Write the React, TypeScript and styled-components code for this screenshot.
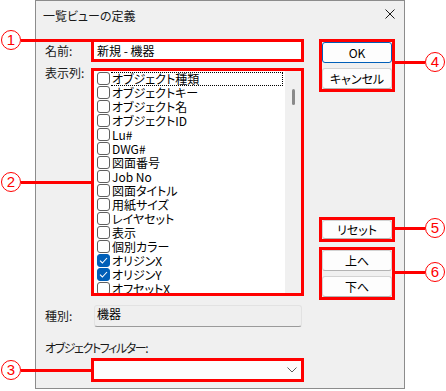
import React from 'react';
import styled, { createGlobalStyle } from 'styled-components';

const GlobalStyle = createGlobalStyle`
  html, body {
    margin: 0;
    padding: 0;
    background: #fff;
  }
  body {
    font-family: "Noto Sans CJK JP", "Noto Sans", sans-serif;
    font-size: 12px;
    font-feature-settings: "palt";
    color: #000;
  }
`;

const columns = [
  { label: 'オブジェクト種類', checked: false },
  { label: 'オブジェクトキー', checked: false },
  { label: 'オブジェクト名', checked: false },
  { label: 'オブジェクトID', checked: false },
  { label: 'Lu#', checked: false },
  { label: 'DWG#', checked: false },
  { label: '図面番号', checked: false },
  { label: 'Job No', checked: false },
  { label: '図面タイトル', checked: false },
  { label: '用紙サイズ', checked: false },
  { label: 'レイヤセット', checked: false },
  { label: '表示', checked: false },
  { label: '個別カラー', checked: false },
  { label: 'オリジンX', checked: true },
  { label: 'オリジンY', checked: true },
  { label: 'オフセットX', checked: false },
];

// numbered callouts drawn over the screenshot
const markers = [
  { n: '1', x: 11, y: 40, from: 21, to: 91 },
  { n: '2', x: 11, y: 182, from: 21, to: 91 },
  { n: '3', x: 11, y: 370, from: 21, to: 91 },
  { n: '4', x: 435, y: 62, from: 395, to: 425 },
  { n: '5', x: 435, y: 228, from: 395, to: 425 },
  { n: '6', x: 435, y: 272, from: 395, to: 425 },
];

const App = () => {
  return (
    <>
      <GlobalStyle />
      <Page>
        <Dialog>
          <TitleBar>
            <Title>一覧ビューの定義</Title>
            <CloseIcon viewBox="0 0 10 10">
              <path d="M0.5 0.5 L9.5 9.5 M9.5 0.5 L0.5 9.5" />
            </CloseIcon>
          </TitleBar>
          <Body>
            <MainColumn>
              <FieldRow>
                <FieldLabel>名前:</FieldLabel>
                <RedFrame $height={23}>
                  <NameInput>新規 - 機器</NameInput>
                </RedFrame>
              </FieldRow>
              <FieldRow $top $gap={6}>
                <FieldLabel $shift={-2}>表示列:</FieldLabel>
                <RedFrame $height={228}>
                  <ListBox>
                    <ListItems>
                      {columns.map((col, index) => (
                        <ListItem key={col.label}>
                          <CheckBox $checked={col.checked}>
                            {col.checked ? (
                              <svg width="9" height="7" viewBox="0 0 9 7">
                                <path
                                  d="M1 3.6 L3.4 6 L8 1"
                                  fill="none"
                                  stroke="#fff"
                                  strokeWidth="1.1"
                                />
                              </svg>
                            ) : null}
                          </CheckBox>
                          <ItemText $focused={index === 0}>{col.label}</ItemText>
                        </ListItem>
                      ))}
                    </ListItems>
                    <ScrollTrack>
                      <ScrollThumb />
                    </ScrollTrack>
                  </ListBox>
                </RedFrame>
              </FieldRow>
              <FieldRow $gap={9}>
                <FieldLabel>種別:</FieldLabel>
                <ReadOnlyField>機器</ReadOnlyField>
              </FieldRow>
              <FilterLabel>オブジェクトフィルター:</FilterLabel>
              <ComboFrame>
                <Combo>
                  <svg width="10" height="6" viewBox="0 0 10 6">
                    <path d="M0.5 0.5 L5 5 L9.5 0.5" fill="none" stroke="#5c5c5c" strokeWidth="1" />
                  </svg>
                </Combo>
              </ComboFrame>
            </MainColumn>
            <SideColumn>
              <RedFrame $height={53}>
                <ButtonStack>
                  <DialogButton $primary>OK</DialogButton>
                  <DialogButton>キャンセル</DialogButton>
                </ButtonStack>
              </RedFrame>
              <RedFrame $height={25} $gap={125}>
                <DialogButton $tall={19}>リセット</DialogButton>
              </RedFrame>
              <RedFrame $height={53} $gap={5}>
                <ButtonStack>
                  <DialogButton>上へ</DialogButton>
                  <DialogButton>下へ</DialogButton>
                </ButtonStack>
              </RedFrame>
            </SideColumn>
          </Body>
        </Dialog>
        {markers.map((m) => (
          <React.Fragment key={m.n}>
            <Leader $from={m.from} $to={m.to} $y={m.y} />
            <Marker $x={m.x} $y={m.y}>{m.n}</Marker>
          </React.Fragment>
        ))}
      </Page>
    </>
  );
};

const Page = styled.div`
  position: relative;
  width: 446px;
  height: 391px;
  overflow: hidden;
  background: #fff;
`;

const Dialog = styled.div`
  margin-left: 35px;
  width: 370px;
  height: 389px;
  box-sizing: border-box;
  border: 1px solid #8c8c8c;
  background: #f0f0f0;
  display: flex;
  flex-direction: column;
`;

const TitleBar = styled.div`
  height: 29px;
  display: flex;
  align-items: center;
  justify-content: space-between;
  padding: 0 9px 0 7px;
`;

const Title = styled.span`
  font-size: 12px;
  line-height: 14px;
  color: #1a1a1a;
`;

const CloseIcon = styled.svg`
  width: 10px;
  height: 10px;
  margin-bottom: 4px;
  stroke: #1a1a1a;
  stroke-width: 1;
  fill: none;
`;

const Body = styled.div`
  display: flex;
  padding: 9px 0 0 9px;
`;

const MainColumn = styled.div`
  display: flex;
  flex-direction: column;
  width: 259px;
`;

const SideColumn = styled.div`
  display: flex;
  flex-direction: column;
  width: 76px;
  margin-left: 15px;
`;

const FieldRow = styled.div<{ $top?: boolean; $gap?: number }>`
  display: flex;
  align-items: ${({ $top }) => ($top ? 'flex-start' : 'center')};
  margin-top: ${({ $gap }) => $gap || 0}px;
`;

const FieldLabel = styled.span<{ $shift?: number }>`
  width: 46px;
  flex-shrink: 0;
  font-size: 12px;
  line-height: 14px;
  color: #1a1a1a;
  margin-top: ${({ $shift }) => $shift || 0}px;
`;

const RedFrame = styled.div<{ $height: number; $gap?: number }>`
  box-sizing: border-box;
  width: 213px;
  height: ${({ $height }) => $height}px;
  margin-top: ${({ $gap }) => $gap || 0}px;
  border: 3px solid #ff0000;
  display: flex;
  flex-direction: column;

  ${SideColumn} & {
    width: 76px;
  }
`;

const NameInput = styled.div`
  flex: 1;
  background: #fff;
  padding-left: 3px;
  font-size: 12px;
  line-height: 17px;
  white-space: nowrap;
`;

const ListBox = styled.div`
  flex: 1;
  display: flex;
  background: #fff;
  overflow: hidden;
`;

const ListItems = styled.div`
  flex: 1;
  display: flex;
  flex-direction: column;
  padding-right: 2px;
`;

const ListItem = styled.div`
  display: flex;
  align-items: center;
  height: 14px;
  flex-shrink: 0;
  padding-left: 3px;
`;

const CheckBox = styled.span<{ $checked?: boolean }>`
  width: 13px;
  height: 13px;
  box-sizing: border-box;
  border-radius: 3px;
  border: 1px solid ${({ $checked }) => ($checked ? '#005fb8' : '#5f5f5f')};
  background: ${({ $checked }) => ($checked ? '#005fb8' : '#fff')};
  display: flex;
  align-items: center;
  justify-content: center;
  flex-shrink: 0;
`;

const ItemText = styled.span<{ $focused?: boolean }>`
  flex: 1;
  height: 14px;
  box-sizing: border-box;
  margin-left: 1px;
  margin-top: 1px;
  padding-left: 1px;
  font-size: 12px;
  line-height: 12px;
  white-space: nowrap;
  border: 1px dotted ${({ $focused }) => ($focused ? '#000' : 'transparent')};
  border-left-width: 0;
`;

const ScrollTrack = styled.div`
  width: 16px;
  flex-shrink: 0;
  background: #f0f0f0;
  padding-top: 18px;
  box-sizing: border-box;
`;

const ScrollThumb = styled.div`
  width: 3px;
  height: 16px;
  margin-left: 7px;
  border-radius: 2px;
  background: #8a8a8a;
`;

const ReadOnlyField = styled.div`
  box-sizing: border-box;
  width: 208px;
  height: 22px;
  margin-left: 3px;
  padding: 1px 0 0 2px;
  border: 1px solid #e2e2e2;
  border-bottom-color: #9a9a9a;
  border-radius: 3px;
  background: #efefef;
  font-size: 12px;
  line-height: 14px;
`;

const FilterLabel = styled.span`
  margin-top: 14px;
  font-size: 12px;
  line-height: 14px;
  letter-spacing: -1.4px;
  color: #1a1a1a;
`;

const ComboFrame = styled.div`
  box-sizing: border-box;
  width: 213px;
  height: 24px;
  margin: 3px 0 0 46px;
  border: 3px solid #ff0000;
  display: flex;
`;

const Combo = styled.div`
  flex: 1;
  background: #fdfdfd;
  display: flex;
  align-items: center;
  justify-content: flex-end;
  padding-right: 4px;
`;

const ButtonStack = styled.div`
  flex: 1;
  display: flex;
  flex-direction: column;
  justify-content: space-between;
`;

const DialogButton = styled.button<{ $primary?: boolean; $tall?: number }>`
  box-sizing: border-box;
  width: 100%;
  height: ${({ $tall }) => $tall || 21}px;
  padding: 0;
  border-radius: 3px;
  border: 1px solid ${({ $primary }) => ($primary ? '#005fb8' : '#d3d3d3')};
  border-bottom-color: ${({ $primary }) => ($primary ? '#005fb8' : '#b3b3b3')};
  background: #fdfdfd;
  color: #000;
  font-family: "Noto Sans CJK JP", "Noto Sans", sans-serif;
  font-feature-settings: "palt";
  font-size: 12px;
  line-height: 14px;
`;

const Leader = styled.div<{ $from: number; $to: number; $y: number }>`
  position: absolute;
  left: ${({ $from }) => $from}px;
  width: ${({ $from, $to }) => $to - $from}px;
  top: ${({ $y }) => $y - 1.5}px;
  height: 3px;
  background: #ff0000;
`;

const Marker = styled.div<{ $x: number; $y: number }>`
  position: absolute;
  left: ${({ $x }) => $x - 10}px;
  top: ${({ $y }) => $y - 10}px;
  width: 20px;
  height: 20px;
  box-sizing: border-box;
  border: 1.5px solid #ff0000;
  border-radius: 50%;
  background: #fff;
  color: #ff0000;
  font-family: "Liberation Sans", sans-serif;
  font-size: 15px;
  line-height: 17px;
  text-align: center;
`;

export default App;
